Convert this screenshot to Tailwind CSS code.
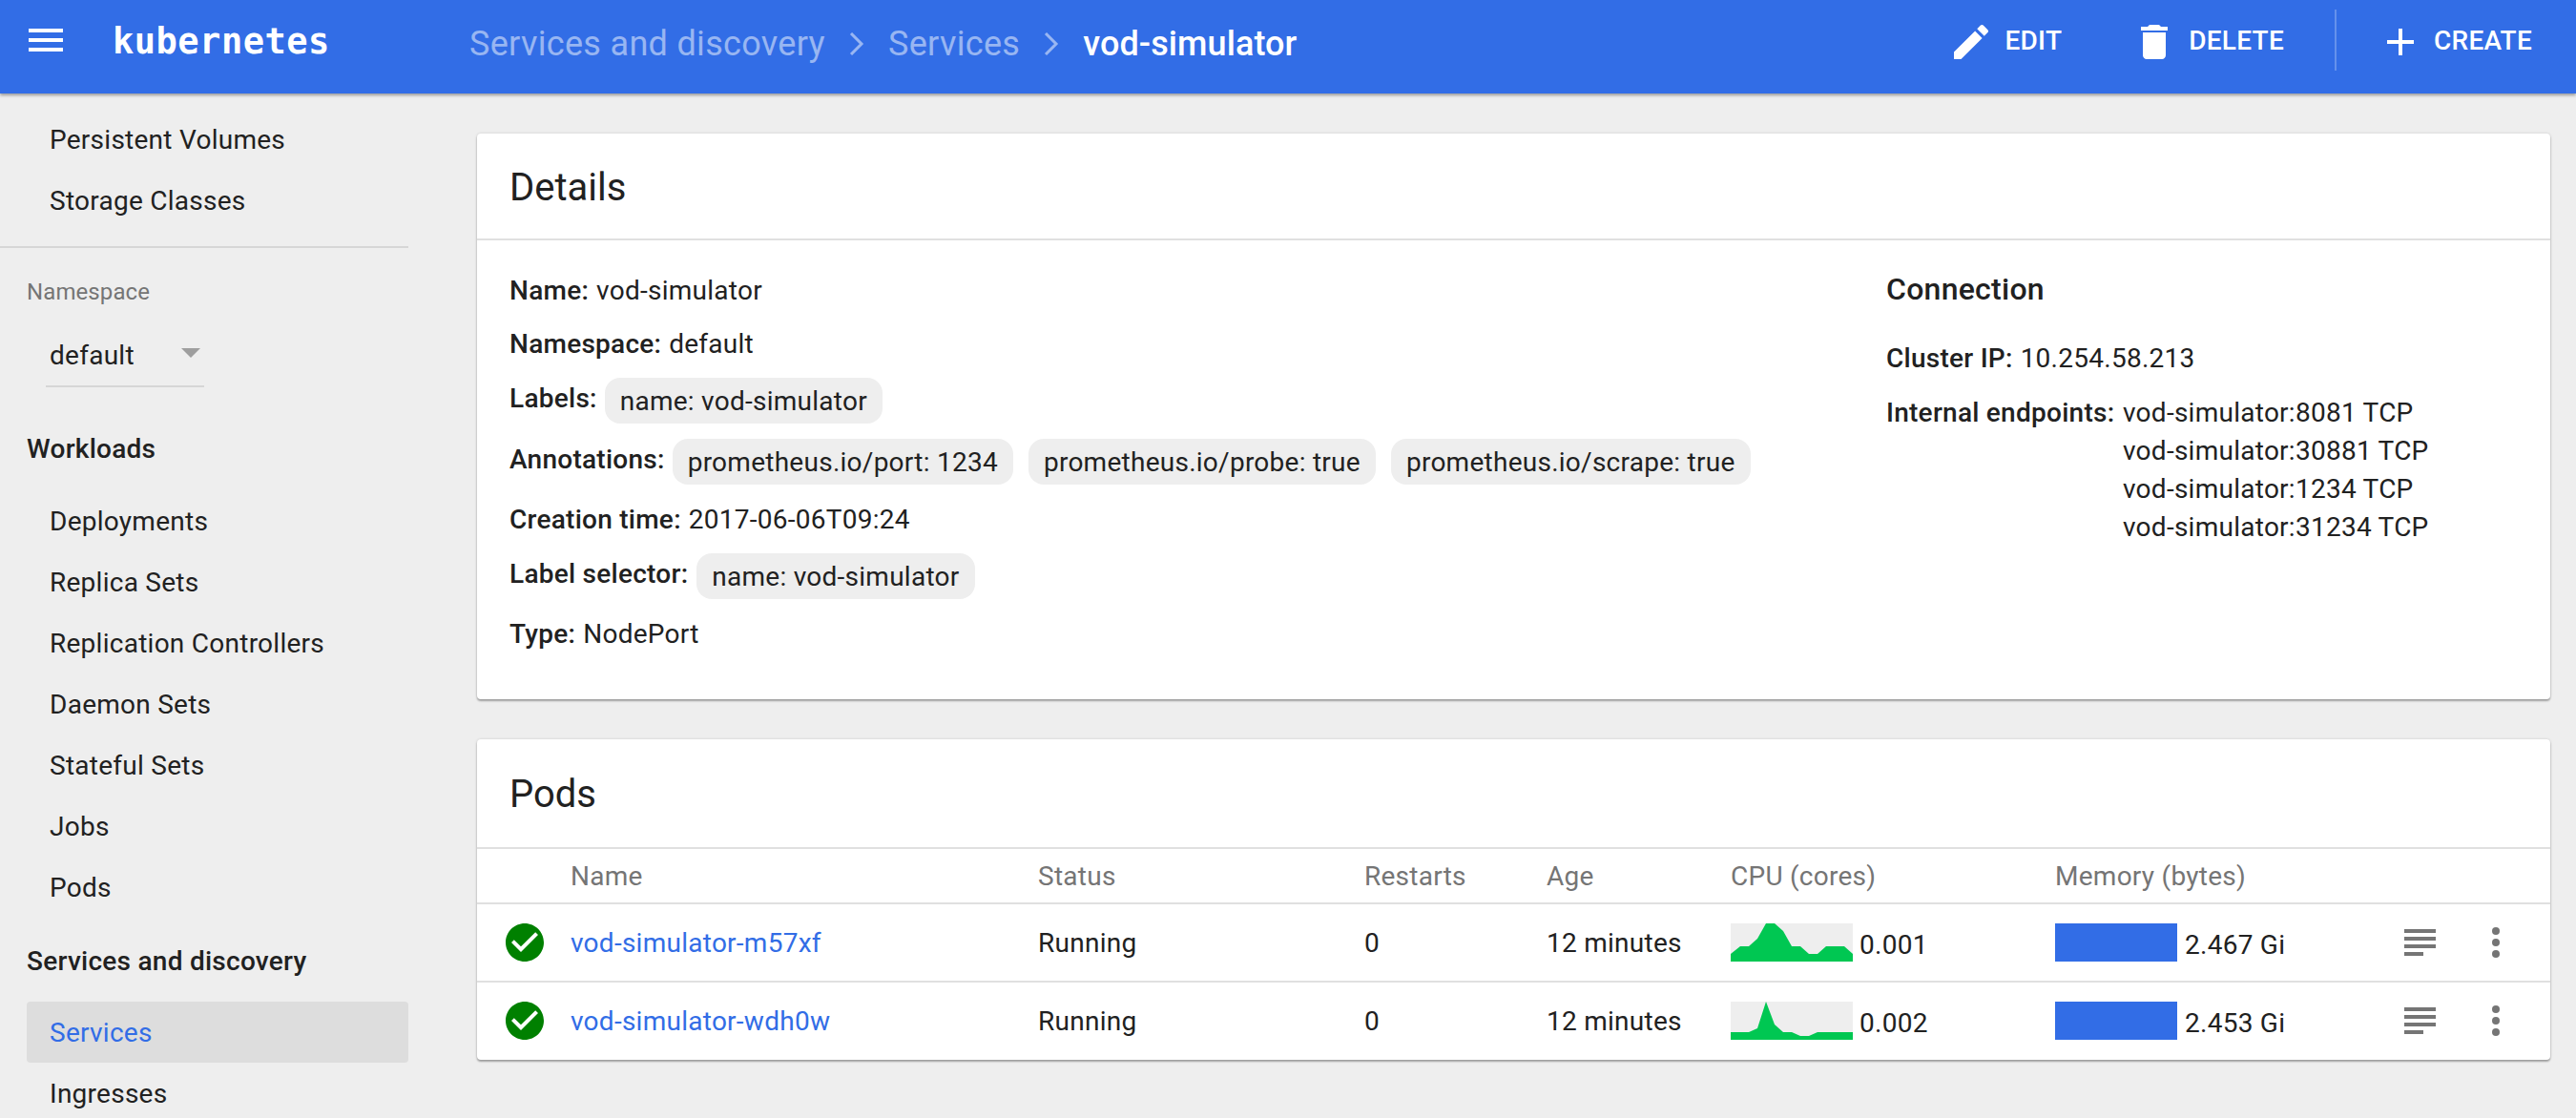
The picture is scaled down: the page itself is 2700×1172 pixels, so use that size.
<!DOCTYPE html>
<html lang="en">
<head>
  <meta charset="UTF-8">
  <title>kubernetes - vod-simulator</title>
  <script src="https://cdn.jsdelivr.net/npm/@tailwindcss/browser@4"></script>
</head>
<body class="bg-[#eeeeee] font-['Roboto',sans-serif] text-[#212121] text-[28px] leading-[40px] tracking-[0.26px]">
<div class="h-[1172px] overflow-hidden relative">

  <!-- header -->
  <header class="relative z-10 h-[98px] bg-[#326de6] text-white flex items-start shadow-[0_2px_3px_rgba(0,0,0,0.35)]">
    <svg class="w-12 h-12 mt-[18px] ml-[24px] shrink-0" viewBox="0 0 24 24" fill="currentColor"><path d="M3 18h18v-2H3v2zm0-5h18v-2H3v2zm0-7v2h18V6H3z"/></svg>
    <div class="ml-[46px] w-[374px] mt-[19px] font-['DejaVu_Sans_Mono',monospace] font-bold text-[37px] leading-[50px] tracking-[0.5px]">kubernetes</div>
    <nav class="flex items-center h-[92px] text-[36px] leading-[48px] tracking-[0.32px]">
      <span class="text-white/50">Services and discovery</span>
      <svg class="w-4 h-6 mx-[25px]" viewBox="0 0 16 24" fill="none" stroke="currentColor" stroke-width="3" opacity="0.5"><path d="M2 1l11 11L2 23"/></svg>
      <span class="text-white/50">Services</span>
      <svg class="w-4 h-6 mx-[25px]" viewBox="0 0 16 24" fill="none" stroke="currentColor" stroke-width="3" opacity="0.5"><path d="M2 1l11 11L2 23"/></svg>
      <span class="font-medium tracking-[0.1px]">vod-simulator</span>
    </nav>
    <div class="ml-auto pr-[46px] flex items-start font-medium">
      <svg class="w-12 h-12 mt-5" viewBox="0 0 24 24" fill="currentColor"><path d="M3 17.25V21h3.75L17.81 9.94l-3.75-3.75L3 17.25zM20.71 7.04c.39-.39.39-1.02 0-1.41l-2.34-2.34c-.39-.39-1.02-.39-1.41 0l-1.83 1.83 3.75 3.75 1.83-1.83z"/></svg>
      <span class="ml-[11px] mt-[23px]">EDIT</span>
      <svg class="w-12 h-12 mt-5 ml-[73px]" viewBox="0 0 24 24" fill="currentColor"><path d="M6 19c0 1.1.9 2 2 2h8c1.1 0 2-.9 2-2V7H6v12zM19 4h-3.5l-1-1h-5l-1 1H5v2h14V4z"/></svg>
      <span class="ml-3 mt-[23px]">DELETE</span>
      <div class="w-[2px] h-16 mt-[10px] bg-white/25 ml-[53px]"></div>
      <svg class="w-12 h-12 mt-5 ml-[43px]" viewBox="0 0 24 24" fill="currentColor"><path d="M19 13h-6v6h-2v-6H5v-2h6V5h2v6h6v2z"/></svg>
      <span class="ml-[11px] mt-[23px]">CREATE</span>
    </div>
  </header>

  <div class="flex">
    <!-- sidebar -->
    <aside class="w-[428px] shrink-0 pt-4">
      <a class="h-16 pt-[2px] flex items-center px-[52px]">Persistent Volumes</a>
      <a class="h-16 pt-[2px] flex items-center px-[52px]">Storage Classes</a>
      <div class="h-[2px] bg-[#d6d6d6] mt-4"></div>
      <div class="mt-[34px] pl-7 text-[24px] leading-6 text-[#757575] tracking-[0.1px]">Namespace</div>
      <div class="mt-[22px] ml-12 w-[166px] h-[66px] pt-[2px] border-b-2 border-[#d6d6d6] flex items-center relative font-normal">
        <span class="pl-1">default</span>
        <span class="absolute left-[142px] top-[25px] w-0 h-0 border-x-[10px] border-x-transparent border-t-[10px] border-t-[#9e9e9e]"></span>
      </div>
      <div class="mt-8 h-16 pt-[2px] flex items-center pl-7 font-medium">Workloads</div>
      <div class="mt-3">
        <a class="h-16 pt-[2px] flex items-center px-[52px]">Deployments</a>
        <a class="h-16 pt-[2px] flex items-center px-[52px]">Replica Sets</a>
        <a class="h-16 pt-[2px] flex items-center px-[52px]">Replication Controllers</a>
        <a class="h-16 pt-[2px] flex items-center px-[52px]">Daemon Sets</a>
        <a class="h-16 pt-[2px] flex items-center px-[52px]">Stateful Sets</a>
        <a class="h-16 pt-[2px] flex items-center px-[52px]">Jobs</a>
        <a class="h-16 pt-[2px] flex items-center px-[52px]">Pods</a>
      </div>
      <div class="mt-[13px] h-16 pt-[2px] flex items-center pl-7 font-medium">Services and discovery</div>
      <div class="mt-[11px]">
        <a class="h-16 pt-[2px] flex items-center ml-7 pl-6 rounded-[4px] bg-[#dddddd] text-[#326de6]">Services</a>
        <a class="h-16 pt-[2px] flex items-center px-[52px]">Ingresses</a>
      </div>
    </aside>

    <!-- content -->
    <main class="flex-1 pl-[72px] pr-[27px] pt-[42px]">
      <section class="bg-white rounded-[4px] h-[593px] shadow-[0_2px_2px_rgba(0,0,0,0.3),0_0_3px_rgba(0,0,0,0.15)]">
        <h2 class="h-[112px] pt-[3px] border-b-2 border-[#e0e0e0] flex items-center pl-[34px] text-[40px] leading-[48px] tracking-normal">Details</h2>
        <div class="flex pl-[34px] pt-[29px]">
          <div class="w-[1443px] shrink-0">
            <div class="h-12 flex items-center"><b class="font-medium mr-2">Name:</b>vod-simulator</div>
            <div class="h-12 mt-2 flex items-center"><b class="font-medium mr-2">Namespace:</b>default</div>
            <div class="h-12 mt-[11px] flex items-center">
              <b class="font-medium mr-2 mb-1">Labels:</b>
              <span class="h-12 px-4 pt-[2px] rounded-2xl bg-[#eeeeee] flex items-center">name: vod-simulator</span>
            </div>
            <div class="h-12 mt-4 flex items-center gap-4">
              <b class="font-medium -mr-2 mb-1">Annotations:</b>
              <span class="h-12 px-4 pt-[2px] rounded-2xl bg-[#eeeeee] flex items-center">prometheus.io/port: 1234</span>
              <span class="h-12 px-4 pt-[2px] rounded-2xl bg-[#eeeeee] flex items-center">prometheus.io/probe: true</span>
              <span class="h-12 px-4 pt-[2px] rounded-2xl bg-[#eeeeee] flex items-center">prometheus.io/scrape: true</span>
            </div>
            <div class="h-12 mt-[13px] flex items-center"><b class="font-medium mr-2">Creation time:</b>2017-06-06T09:24</div>
            <div class="h-12 mt-[11px] flex items-center">
              <b class="font-medium mr-[9px] mb-1">Label selector:</b>
              <span class="h-12 px-4 pt-[2px] rounded-2xl bg-[#eeeeee] flex items-center">name: vod-simulator</span>
            </div>
            <div class="h-12 mt-[13px] flex items-center"><b class="font-medium mr-2">Type:</b>NodePort</div>
          </div>
          <div class="flex-1">
            <h3 class="h-12 -mt-[2px] flex items-center text-[32px] font-medium">Connection</h3>
            <div class="mt-[25px] h-12 flex items-center"><b class="font-medium mr-2">Cluster IP:</b>10.254.58.213</div>
            <div class="mt-[13px] flex">
              <b class="font-medium w-[248px] shrink-0">Internal endpoints:</b>
              <div>
                <div>vod-simulator:8081 TCP</div>
                <div>vod-simulator:30881 TCP</div>
                <div>vod-simulator:1234 TCP</div>
                <div>vod-simulator:31234 TCP</div>
              </div>
            </div>
          </div>
        </div>
      </section>

      <section class="mt-[42px] bg-white rounded-[4px] shadow-[0_2px_2px_rgba(0,0,0,0.3),0_0_3px_rgba(0,0,0,0.15)]">
        <h2 class="h-[115px] pt-[2px] border-b-2 border-[#e0e0e0] flex items-center pl-[34px] text-[40px] leading-[48px] tracking-normal">Pods</h2>
        <div class="grid grid-cols-[98px_490px_342px_191px_193px_340px_366px_1fr] h-[58px] pt-[2px] items-center border-b-2 border-[#e0e0e0] text-[#757575]">
          <span></span><span>Name</span><span>Status</span><span>Restarts</span><span>Age</span><span>CPU (cores)</span><span>Memory (bytes)</span><span></span>
        </div>
        <div class="grid grid-cols-[98px_490px_342px_191px_193px_340px_366px_1fr] h-[82px] items-center border-b-2 border-[#e0e0e0]">
          <svg class="w-12 h-12 ml-[26px]" viewBox="0 0 24 24" fill="#008000"><path d="M12 2C6.48 2 2 6.48 2 12s4.48 10 10 10 10-4.48 10-10S17.52 2 12 2zm-2 15l-5-5 1.41-1.41L10 14.17l7.59-7.59L19 8l-9 9z"/></svg>
          <a class="text-[#326de6] mt-[2px]">vod-simulator-m57xf</a>
          <span class="mt-[2px]">Running</span>
          <span class="mt-[2px]">0</span>
          <span class="mt-[2px]">12 minutes</span>
          <div class="flex items-center">
            <svg class="w-32 h-10 bg-[#eeeeee]" viewBox="0 0 128 40" fill="#00c752"><path d="M0 32l10-8h9l9-8 9-16h9l9 8 9 16h9l9 8h9l9-8h19l9 8v8H0z"/></svg>
            <span class="ml-[7px] mt-[6px]">0.001</span>
          </div>
          <div class="flex items-center">
            <div class="w-32 h-10 bg-[#326de6]"></div>
            <span class="ml-[8px] mt-[6px]">2.467 Gi</span>
          </div>
          <div class="flex items-center">
            <div class="w-[33px] flex flex-col gap-[4px]">
              <div class="h-1 bg-[#757575]"></div><div class="h-1 bg-[#757575]"></div><div class="h-1 bg-[#757575]"></div><div class="h-1 w-5 bg-[#757575]"></div>
            </div>
            <div class="ml-[59px] flex flex-col gap-1">
              <div class="w-2 h-2 rounded-full bg-[#757575]"></div><div class="w-2 h-2 rounded-full bg-[#757575]"></div><div class="w-2 h-2 rounded-full bg-[#757575]"></div>
            </div>
          </div>
        </div>
        <div class="grid grid-cols-[98px_490px_342px_191px_193px_340px_366px_1fr] h-[81px] pb-px items-center">
          <svg class="w-12 h-12 ml-[26px]" viewBox="0 0 24 24" fill="#008000"><path d="M12 2C6.48 2 2 6.48 2 12s4.48 10 10 10 10-4.48 10-10S17.52 2 12 2zm-2 15l-5-5 1.41-1.41L10 14.17l7.59-7.59L19 8l-9 9z"/></svg>
          <a class="text-[#326de6] mt-[2px]">vod-simulator-wdh0w</a>
          <span class="mt-[2px]">Running</span>
          <span class="mt-[2px]">0</span>
          <span class="mt-[2px]">12 minutes</span>
          <div class="flex items-center">
            <svg class="w-32 h-10 bg-[#eeeeee]" viewBox="0 0 128 40" fill="#00c752"><path d="M0 32h19l9-4 9-28 9 24 9 8h9l9 4h9l9-4h37v8H0z"/></svg>
            <span class="ml-[7px] mt-[6px]">0.002</span>
          </div>
          <div class="flex items-center">
            <div class="w-32 h-10 bg-[#326de6]"></div>
            <span class="ml-[8px] mt-[6px]">2.453 Gi</span>
          </div>
          <div class="flex items-center">
            <div class="w-[33px] flex flex-col gap-[4px]">
              <div class="h-1 bg-[#757575]"></div><div class="h-1 bg-[#757575]"></div><div class="h-1 bg-[#757575]"></div><div class="h-1 w-5 bg-[#757575]"></div>
            </div>
            <div class="ml-[59px] flex flex-col gap-1">
              <div class="w-2 h-2 rounded-full bg-[#757575]"></div><div class="w-2 h-2 rounded-full bg-[#757575]"></div><div class="w-2 h-2 rounded-full bg-[#757575]"></div>
            </div>
          </div>
        </div>
      </section>
    </main>
  </div>
</div>
</body>
</html>
